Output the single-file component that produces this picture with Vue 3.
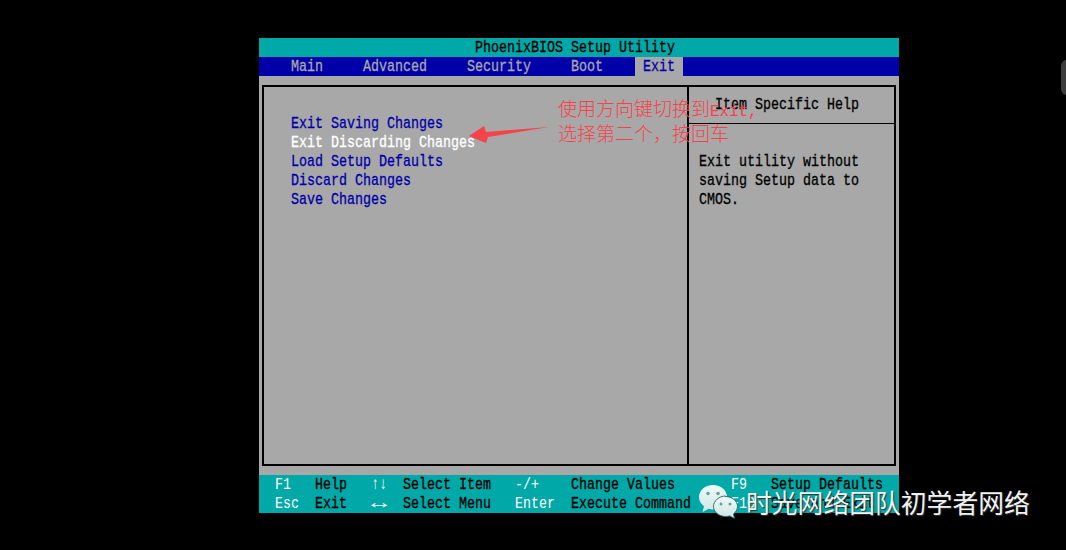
<template>
  <div class="page">
    <div class="bios">
      <div class="title"><span class="t">PhoenixBIOS Setup Utility</span></div>
      <div class="menu">
        <div
          class="tab"
          v-for="tab in tabs"
          :key="tab"
          :class="{ active: tab === 'Exit' }"
        >
          <span class="t">{{ tab }}</span>
        </div>
      </div>
      <div class="body">
        <div class="frame">
          <div class="left">
            <div
              class="row"
              v-for="item in items"
              :key="item"
              :class="{ selected: item === 'Exit Discarding Changes' }"
            >
              <span class="t">{{ item }}</span>
            </div>
          </div>
          <div class="right">
            <div class="help-head"><span class="t">Item Specific Help</span></div>
            <div class="help-body">
              <div class="row" v-for="line in helpLines" :key="line">
                <span class="t">{{ line }}</span>
              </div>
            </div>
          </div>
        </div>
      </div>
      <div class="footer">
        <template v-for="cell in footer" :key="cell.text">
          <div :class="cell.key ? 'key' : 'label'">
            <span class="t" :class="{ wide: cell.text === '↔' }">{{ cell.text }}</span>
          </div>
        </template>
      </div>
    </div>

    <!-- red note pasted on top of the screenshot -->
    <svg class="arrow" width="90" height="24" viewBox="0 0 90 24">
      <polygon points="1,12 16,2 18,8 81,3 20,13 18,19" fill="#f8424a" />
    </svg>
    <div class="note">
      <div>使用方向键切换到<span class="latin">Exit,</span></div>
      <div>选择第二个，按回车</div>
    </div>

    <div class="watermark">
      <svg class="wechat" width="42" height="36" viewBox="0 0 42 36">
        <defs>
          <linearGradient id="bubble" x1="0" y1="0" x2="0" y2="1">
            <stop offset="0" stop-color="#eefaf8" />
            <stop offset="1" stop-color="#cfe6e4" />
          </linearGradient>
        </defs>
        <path d="M15 1C7 1 1 6.500 1 13c0 3.800 2 7 5 9.200L4.500 28l6.200-3.200c1.400.4 2.800.6 4.300.6 8 0 14-5.500 14-12.400S23 1 15 1z" fill="url(#bubble)" />
        <path d="M27.500 12.500C34 12.500 39.500 17 39.500 22.500c0 3-1.600 5.500-4 7.400l1 4.600-4.800-2.600c-1.300.4-2.700.6-4.200.6-6.500 0-12-4.500-12-10s5.500-10.500 12-10.500z" fill="url(#bubble)" stroke="#1f6461" stroke-width="0.9" />
        <circle cx="10" cy="9.500" r="1.800" fill="#6f9c99" />
        <circle cx="20" cy="9.500" r="1.800" fill="#6f9c99" />
        <circle cx="23" cy="20" r="1.500" fill="#6f9c99" />
        <circle cx="32" cy="20" r="1.500" fill="#6f9c99" />
      </svg>
      <span class="wm-text">时光网络团队初学者网络</span>
    </div>

    <div class="side-pill"></div>
  </div>
</template>

<script setup>
const tabs = ["Main", "Advanced", "Security", "Boot", "Exit"];
const items = [
  "Exit Saving Changes",
  "Exit Discarding Changes",
  "Load Setup Defaults",
  "Discard Changes",
  "Save Changes",
];
const helpLines = ["Exit utility without", "saving Setup data to", "CMOS."];
const footer = [
  { text: "F1", key: true },
  { text: "Help" },
  { text: "↑↓", key: true },
  { text: "Select Item" },
  { text: "-/+", key: true },
  { text: "Change Values" },
  { text: "F9", key: true },
  { text: "Setup Defaults" },
  { text: "Esc", key: true },
  { text: "Exit" },
  { text: "↔", key: true },
  { text: "Select Menu" },
  { text: "Enter", key: true },
  { text: "Execute Command" },
  { text: "F10", key: true },
  { text: "Save and Exit" },
];
</script>

<style>
html,
body {
  margin: 0;
  background: #000;
}
</style>

<style scoped>
.page {
  position: relative;
  width: 1066px;
  height: 550px;
  overflow: hidden;
  background: #000;
  padding: 38px 0 0 259px;
  box-sizing: border-box;
}
.bios {
  width: 640px;
  height: 475px;
  display: flex;
  flex-direction: column;
  background: #a8a8a8;
  font-family: "Liberation Mono", monospace;
  font-size: 13.33px;
  line-height: 19px;
  white-space: pre;
}
.t {
  display: inline-block;
  transform: translateY(0.5px) scaleY(1.28);
  -webkit-text-stroke: 0.25px currentColor;
}
.title {
  height: 19px;
  background: #00a8a8;
  color: #000;
  text-align: center;
  padding-right: 8px;
}
.menu {
  height: 19px;
  background: #0000a8;
  color: #a8a8a8;
  display: flex;
  gap: 24px;
  padding-left: 24px;
}
.tab {
  padding: 0 8px;
}
.tab.active {
  background: #a8a8a8;
  color: #0000a8;
}
.body {
  flex: 1;
  padding: 9px 3px;
  min-height: 0;
}
.frame {
  height: 100%;
  box-sizing: border-box;
  border: 2px solid #000;
  display: flex;
}
.left {
  width: 425px;
  box-sizing: border-box;
  padding: 27px 0 0 27px;
  border-right: 2px solid #000;
  color: #0000a8;
}
.row {
  height: 19px;
}
.selected {
  color: #fff;
}
.right {
  flex: 1;
  color: #000;
}
.help-head {
  height: 37px;
  box-sizing: border-box;
  padding: 8px 0 0 26px;
  border-bottom: 1px solid #000;
}
.help-body {
  padding: 28px 0 0 10px;
}
.footer {
  height: 38px;
  background: #00a8a8;
  color: #000;
  padding-left: 16px;
  display: grid;
  grid-template-columns: 40px 56px 32px 112px 56px 160px 40px 1fr;
  grid-auto-rows: 19px;
}
.key {
  color: #fff;
}
.key .t {
  -webkit-text-stroke: 0;
}
.key .t.wide {
  transform: translateY(0.5px) scale(2, 1.28);
  transform-origin: left center;
}
.label {
  color: #000;
}
.arrow {
  position: absolute;
  left: 468px;
  top: 124px;
}
.note {
  position: absolute;
  left: 558px;
  top: 96px;
  font-family: "Noto Sans CJK SC", "Liberation Sans", sans-serif;
  font-size: 19px;
  font-weight: 300;
  line-height: 24px;
  color: #f8424a;
  white-space: nowrap;
}
.latin {
  font-family: "Liberation Mono", monospace;
  font-size: 15.8px;
  line-height: 1;
}
.watermark {
  position: absolute;
  left: 698px;
  top: 484px;
  display: flex;
  align-items: flex-start;
}
.wm-text {
  margin: 0 0 0 6px;
  font-family: "Noto Sans CJK SC", "Liberation Sans", sans-serif;
  font-size: 25.8px;
  line-height: 36px;
  color: #f2f2f2;
  text-shadow: 1px 1px 1px #333;
  white-space: nowrap;
}
.side-pill {
  position: absolute;
  right: -9px;
  top: 60px;
  width: 14px;
  height: 35px;
  border-radius: 6px;
  background: #3c3c3c;
}
</style>
